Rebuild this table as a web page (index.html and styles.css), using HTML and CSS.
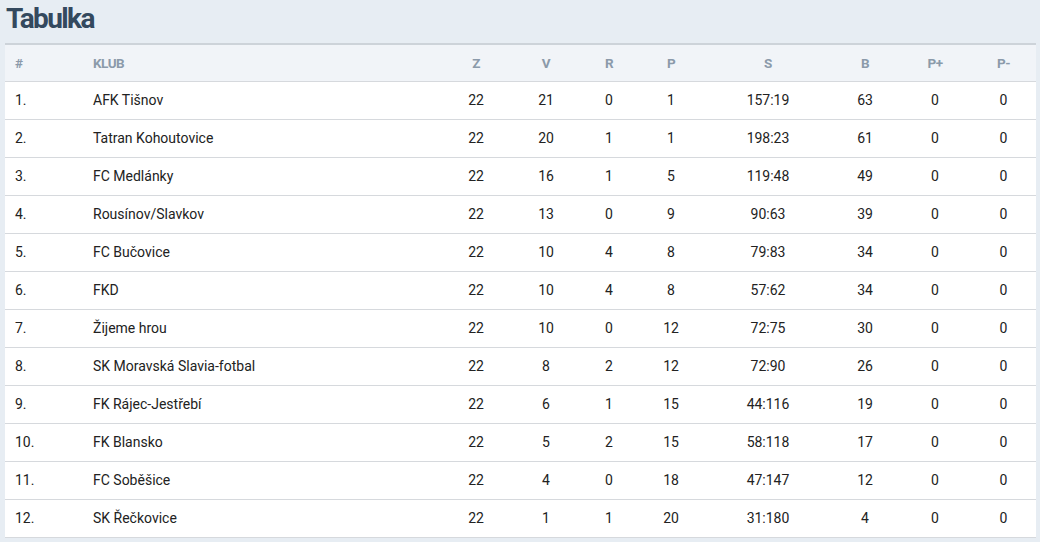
FILE: index.html
```html
<!DOCTYPE html>
<html lang="cs">
<head>
<meta charset="utf-8">
<title>Tabulka</title>
<link rel="stylesheet" href="styles.css">
</head>
<body>
<h1 class="title">Tabulka</h1>
<table class="standings">
<colgroup>
<col class="c-pos"><col class="c-club"><col class="c-z"><col class="c-v"><col class="c-r"><col class="c-p"><col class="c-s"><col class="c-b"><col class="c-pp"><col class="c-pm">
</colgroup>
<thead>
<tr><th class="left">#</th><th class="left">KLUB</th><th>Z</th><th>V</th><th>R</th><th>P</th><th>S</th><th>B</th><th>P+</th><th>P-</th></tr>
</thead>
<tbody>
<tr><td class="left">1.</td><td class="left">AFK Tišnov</td><td>22</td><td>21</td><td>0</td><td>1</td><td>157:19</td><td>63</td><td>0</td><td>0</td></tr>
<tr><td class="left">2.</td><td class="left">Tatran Kohoutovice</td><td>22</td><td>20</td><td>1</td><td>1</td><td>198:23</td><td>61</td><td>0</td><td>0</td></tr>
<tr><td class="left">3.</td><td class="left">FC Medlánky</td><td>22</td><td>16</td><td>1</td><td>5</td><td>119:48</td><td>49</td><td>0</td><td>0</td></tr>
<tr><td class="left">4.</td><td class="left">Rousínov/Slavkov</td><td>22</td><td>13</td><td>0</td><td>9</td><td>90:63</td><td>39</td><td>0</td><td>0</td></tr>
<tr><td class="left">5.</td><td class="left">FC Bučovice</td><td>22</td><td>10</td><td>4</td><td>8</td><td>79:83</td><td>34</td><td>0</td><td>0</td></tr>
<tr><td class="left">6.</td><td class="left">FKD</td><td>22</td><td>10</td><td>4</td><td>8</td><td>57:62</td><td>34</td><td>0</td><td>0</td></tr>
<tr><td class="left">7.</td><td class="left">Žijeme hrou</td><td>22</td><td>10</td><td>0</td><td>12</td><td>72:75</td><td>30</td><td>0</td><td>0</td></tr>
<tr><td class="left">8.</td><td class="left">SK Moravská Slavia-fotbal</td><td>22</td><td>8</td><td>2</td><td>12</td><td>72:90</td><td>26</td><td>0</td><td>0</td></tr>
<tr><td class="left">9.</td><td class="left">FK Rájec-Jestřebí</td><td>22</td><td>6</td><td>1</td><td>15</td><td>44:116</td><td>19</td><td>0</td><td>0</td></tr>
<tr><td class="left">10.</td><td class="left">FK Blansko</td><td>22</td><td>5</td><td>2</td><td>15</td><td>58:118</td><td>17</td><td>0</td><td>0</td></tr>
<tr><td class="left">11.</td><td class="left">FC Soběšice</td><td>22</td><td>4</td><td>0</td><td>18</td><td>47:147</td><td>12</td><td>0</td><td>0</td></tr>
<tr><td class="left">12.</td><td class="left">SK Řečkovice</td><td>22</td><td>1</td><td>1</td><td>20</td><td>31:180</td><td>4</td><td>0</td><td>0</td></tr>
</tbody>
</table>
</body>
</html>
```
FILE: styles.css
```css
html, body {
  margin: 0;
  padding: 0;
  background: #e7edf3;
}
body {
  padding: 0 4px 0 5px;
  font-family: Roboto, "Liberation Sans", sans-serif;
  color: #222;
}
.title {
  margin: 0;
  height: 43px;
  padding: 3px 0 0 1px;
  box-sizing: border-box;
  font-family: Roboto, "Liberation Sans", sans-serif;
  font-weight: 700;
  font-size: 28px;
  line-height: 32px;
  letter-spacing: -1.6px;
  color: #34495e;
}
.standings {
  width: 1031px;
  border-collapse: collapse;
  table-layout: fixed;
  background: #fff;
  font-size: 14px;
}
.c-pos { width: 78px; }
.c-club { width: 358px; }
.c-z { width: 70px; }
.c-v { width: 70px; }
.c-r { width: 56px; }
.c-p { width: 68px; }
.c-s { width: 126px; }
.c-b { width: 68px; }
.c-pp { width: 72px; }
.c-pm { width: 65px; }
.standings thead tr {
  background: #f1f4f8;
  border-top: 2px solid #cdd3d9;
}
.standings th {
  height: 36px;
  padding: 0;
  font-size: 13.5px;
  font-weight: 700;
  color: #8b9aaa;
  text-align: center;
  letter-spacing: -0.5px;
}
.standings td {
  height: 38px;
  padding: 0 0 1px;
  box-sizing: border-box;
  text-align: center;
  border-top: 1px solid #d6d9dd;
  color: #222;
}
.standings .left {
  text-align: left;
  padding-left: 10px;
}
.standings tbody tr:last-child td {
  border-bottom: 1px solid #d6d9dd;
}
```
